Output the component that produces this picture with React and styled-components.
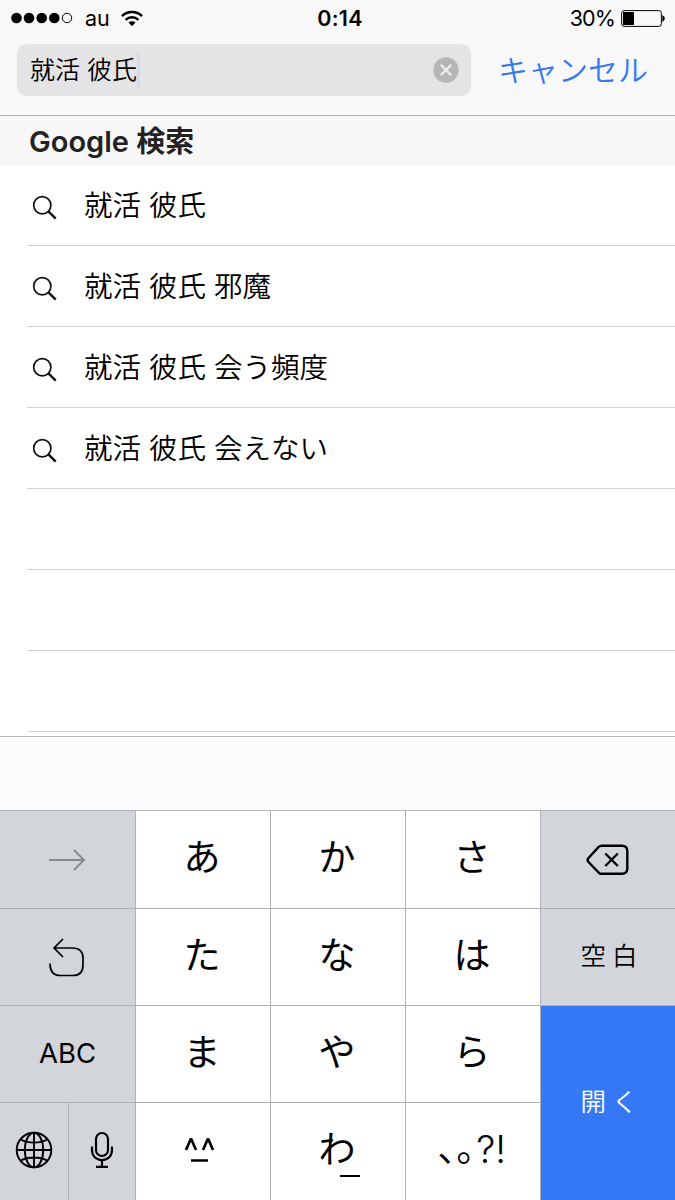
import React, { useState } from "react";
import styled, { createGlobalStyle, css } from "styled-components";

const GlobalStyle = createGlobalStyle`
  * {
    box-sizing: border-box;
  }
  body {
    margin: 0;
    background: #fff;
    color: #000;
    font-family: Inter, "Noto Sans CJK JP", sans-serif;
  }
`;

const Screen = styled.div`
  display: flex;
  flex-direction: column;
  width: 675px;
  height: 1200px;
  overflow: hidden;
`;

const Header = styled.header`
  height: 116px;
  background: #f8f8f8;
  border-bottom: 1px solid #b0b0b1;
`;

const StatusBar = styled.div`
  display: grid;
  grid-template-columns: 1fr auto 1fr;
  align-items: center;
  height: 44px;
  padding: 0 10px 8px 11px;
  font-size: 22px;
  line-height: 36px;
`;

const Carrier = styled.div`
  display: flex;
  align-items: center;

  span {
    margin: 0 11px 0 12px;
    font-size: 21.5px;
  }
`;

const Time = styled.div`
  padding-left: 4px;
  font-size: 21.5px;
  font-weight: 600;
  letter-spacing: 0.3px;
`;

const Battery = styled.div`
  display: flex;
  align-items: center;
  justify-content: flex-end;
  gap: 6px;
  font-size: 21.5px;
  letter-spacing: -0.9px;
`;

const SearchBar = styled.div`
  display: flex;
  align-items: center;
  padding-left: 17px;
`;

const SearchField = styled.div`
  display: flex;
  align-items: center;
  width: 454px;
  height: 52px;
  padding: 0 12px 0 13px;
  border-radius: 9px;
  background: #e4e4e6;
`;

const Query = styled.div`
  font-size: 25px;
  line-height: 50px;
  font-weight: 350;
  white-space: pre;
`;

const Caret = styled.div`
  width: 3px;
  height: 34px;
  margin-right: auto;
  background: #d6d9ea;
`;

const ClearButton = styled.button`
  display: flex;
  padding: 0;
  border: 0;
  background: none;
`;

const Cancel = styled.button`
  margin-left: 27px;
  padding: 0;
  border: 0;
  background: none;
  color: #3478f0;
  font-family: inherit;
  font-size: 30px;
  font-weight: 350;
  line-height: 50px;
`;

const SectionTitle = styled.h2`
  height: 49px;
  margin: 0;
  padding-left: 29px;
  background: #f7f7f7;
  color: #222;
  font-size: 29px;
  font-weight: 600;
  line-height: 52px;
`;

const List = styled.ul`
  height: 571px;
  margin: 0;
  padding: 0 0 0 27px;
  list-style: none;
`;

const Item = styled.li`
  display: flex;
  align-items: center;
  height: 81px;
  padding: 0 0 3px 5px;
  border-bottom: 1px solid #d2d2d4;
  font-size: 28.5px;
  font-weight: 350;

  svg {
    margin: 9px 26px 0 0;
  }
`;

const Candidates = styled.div`
  height: 74px;
  border-top: 1px solid #b5b5b8;
  background: #fcfcfe;
`;

// the 1px gaps let the background through as key separators
const Keyboard = styled.div`
  display: grid;
  grid-template-columns: 135px repeat(4, 134px);
  grid-template-rows: 97px 96px 96px 97px;
  gap: 1px;
  border-top: 1px solid #b4b5ba;
  background: #b0b1b6;
`;

const Key = styled.button`
  display: flex;
  align-items: center;
  justify-content: center;
  padding: 0 2px 4px 0;
  border: 0;
  background: #fff;
  color: #000;
  font-family: inherit;
  font-size: 37px;
  line-height: 1;

  ${(props) =>
    props.$side &&
    css`
      padding: 0;
      background: #d2d5da;
      font-size: 25.5px;
      font-weight: 350;
      word-spacing: -1px;
    `}
  ${(props) =>
    props.$wide &&
    css`
      padding: 0 0 2px 2px;
    `}
  ${(props) =>
    props.$latin &&
    css`
      font-size: 27.5px;
      font-weight: 400;
    `}
  ${(props) =>
    props.$primary &&
    css`
      grid-row: span 2;
      background: #3478f6;
      color: #fff;
    `}
`;

const SplitKey = styled.div`
  display: grid;
  grid-template-columns: 68px 66px;
  gap: 1px;

  svg {
    margin-bottom: 4px;
  }
`;

const Wa = styled.span`
  display: flex;
  flex-direction: column;
  align-items: center;

  &::after {
    content: "";
    width: 20px;
    height: 2px;
    margin: 7px 0 -9px 25px;
    background: #000;
  }
`;

const Punctuation = styled.span`
  display: flex;
  align-items: center;
  padding-left: 1px;
  font-family: "Noto Sans CJK JP", sans-serif;
  font-size: 38px;
  font-weight: 350;
  font-feature-settings: "halt";
`;

const Marks = styled.span`
  margin: -9px 1px 0 -2px;
`;

const LatinMarks = styled.span`
  margin-top: -2px;
  font-family: Inter, sans-serif;
  font-size: 38px;
  font-weight: 300;
`;

const SignalDots = () => (
  <svg width="62" height="12" viewBox="0 0 62 12">
    {[5.5, 18, 30.7, 43.3].map((x) => (
      <circle key={x} cx={x} cy="6" r="5.3" />
    ))}
    <circle cx="56" cy="6" r="4.7" fill="none" stroke="#000" />
  </svg>
);

const Wifi = () => (
  <svg width="22" height="17" viewBox="0 0 22 17" fill="none" stroke="#000" strokeWidth="2.5">
    <path d="M1 6.1a14.2 14.2 0 0 1 20 0" />
    <path d="M4.6 9.8a9.1 9.1 0 0 1 12.8 0" />
    <path d="M11 16.2 7.5 12.6a5 5 0 0 1 7 0z" fill="#000" stroke="none" />
  </svg>
);

const BatteryIcon = () => (
  <svg width="44" height="17" viewBox="0 0 44 17">
    <rect x="0.6" y="0.6" width="39.8" height="15.8" rx="2.6" fill="none" stroke="#000" />
    <path d="M2 2h11v13H2z" />
    <path d="M41.3 5.3c1.5.3 2.4 1.6 2.4 3.2s-.9 2.9-2.4 3.2z" />
  </svg>
);

const ClearIcon = () => (
  <svg width="26" height="26" viewBox="0 0 26 26">
    <circle cx="13" cy="13" r="12.7" fill="#b5b5b7" />
    <path d="m7.8 7.8 10.4 10.4m0-10.4L7.8 18.2" stroke="#f0f0f2" strokeWidth="2.2" />
  </svg>
);

const SearchIcon = () => (
  <svg width="26" height="26" viewBox="0 0 26 26" fill="none" stroke="#111">
    <circle cx="10.3" cy="10.3" r="8.6" strokeWidth="1.7" />
    <path d="m16.4 16.4 7.3 7.3" strokeWidth="2.5" />
  </svg>
);

const ArrowIcon = () => (
  <svg width="38" height="22" viewBox="0 0 38 22" fill="none" stroke="#85888c" strokeWidth="1.8">
    <path d="M0 11h34.5M25 1l10 10-10 10" />
  </svg>
);

const UndoIcon = () => (
  <svg width="38" height="40" viewBox="0 0 38 40" fill="none" stroke="#000" strokeWidth="1.7">
    <path d="M14 2 5 11l9 9M5 11H23c7 0 11 3 11 10v7c0 7-3.500 10.500-10 10.500H11C4.500 38.500 1 35 1 26.500" />
  </svg>
);

const GlobeIcon = () => (
  <svg width="38" height="38" viewBox="0 0 38 38" fill="none" stroke="#000" strokeWidth="1.9">
    <circle cx="19" cy="19" r="17.3" />
    <ellipse cx="19" cy="19" rx="9.2" ry="17.3" />
    <path d="M19 1.700v34.600M1.700 19h34.600M5.800 8.500c7 4.100 19.400 4.100 26.400 0M5.800 29.500c7-4.100 19.400-4.100 26.400 0" />
  </svg>
);

const MicIcon = () => (
  <svg width="24" height="38" viewBox="0 0 24 38" fill="none" stroke="#000" strokeWidth="2.2">
    <rect x="6" y="2" width="12" height="23" rx="6" />
    <path d="M2 15.500V19c0 6 4 10 10 10s10-4 10-10v-3.500M12 29v6.500M6 35.800h12" />
  </svg>
);

const DeleteIcon = () => (
  <svg width="44" height="32" viewBox="0 0 44 32" fill="none" stroke="#000" strokeWidth="2.4" strokeLinejoin="round">
    <path d="M15.500 1.700H36c3.500 0 5.300 1.800 5.300 5.300v17.500c0 3.500-1.800 5.300-5.300 5.300H15.500c-1.200 0-2-.4-2.800-1.200L2.500 18c-1.200-1.300-1.200-2.700 0-4L12.700 2.900c.8-.8 1.600-1.200 2.800-1.200z" />
    <path d="m19.300 9.500 12.500 12.500m0-12.500L19.300 22" />
  </svg>
);

const FaceIcon = () => (
  <svg width="38" height="32" viewBox="0 0 38 32" fill="none" stroke="#000" strokeWidth="2.7" strokeLinejoin="bevel">
    <path d="m3 16 5-11.500L13 16M20 16l5-11.500L30 16M8 26.500h17" />
  </svg>
);

const suggestions = [
  "就活 彼氏",
  "就活 彼氏 邪魔",
  "就活 彼氏 会う頻度",
  "就活 彼氏 会えない",
];

function App() {
  const [query, setQuery] = useState("就活 彼氏");

  const onType = (char) => () => setQuery(query + char);
  const onDelete = () => setQuery(query.slice(0, -1));

  return (
    <Screen>
      <GlobalStyle />
      <Header>
        <StatusBar>
          <Carrier>
            <SignalDots />
            <span>au</span>
            <Wifi />
          </Carrier>
          <Time>0:14</Time>
          <Battery>
            30%
            <BatteryIcon />
          </Battery>
        </StatusBar>
        <SearchBar>
          <SearchField>
            <Query>{query}</Query>
            <Caret />
            <ClearButton onClick={() => setQuery("")}>
              <ClearIcon />
            </ClearButton>
          </SearchField>
          <Cancel>キャンセル</Cancel>
        </SearchBar>
      </Header>

      <SectionTitle>Google 検索</SectionTitle>
      <List>
        {suggestions.map((text) => (
          <Item key={text} onClick={() => setQuery(text)}>
            <SearchIcon />
            {text}
          </Item>
        ))}
        <Item />
        <Item />
        <Item />
      </List>

      <Candidates />
      <Keyboard>
        <Key $side>
          <ArrowIcon />
        </Key>
        <Key onClick={onType("あ")}>あ</Key>
        <Key onClick={onType("か")}>か</Key>
        <Key onClick={onType("さ")}>さ</Key>
        <Key $side onClick={onDelete}>
          <DeleteIcon />
        </Key>

        <Key $side>
          <UndoIcon />
        </Key>
        <Key onClick={onType("た")}>た</Key>
        <Key onClick={onType("な")}>な</Key>
        <Key onClick={onType("は")}>は</Key>
        <Key $side $wide onClick={onType(" ")}>
          空 白
        </Key>

        <Key $side $latin>
          ABC
        </Key>
        <Key onClick={onType("ま")}>ま</Key>
        <Key onClick={onType("や")}>や</Key>
        <Key onClick={onType("ら")}>ら</Key>
        <Key $side $wide $primary>
          開 く
        </Key>

        <SplitKey>
          <Key $side>
            <GlobeIcon />
          </Key>
          <Key $side>
            <MicIcon />
          </Key>
        </SplitKey>
        <Key>
          <FaceIcon />
        </Key>
        <Key onClick={onType("わ")}>
          <Wa>わ</Wa>
        </Key>
        <Key onClick={onType("、")}>
          <Punctuation>
            <Marks>、。</Marks>
            <LatinMarks>?!</LatinMarks>
          </Punctuation>
        </Key>
      </Keyboard>
    </Screen>
  );
}

export default App;
